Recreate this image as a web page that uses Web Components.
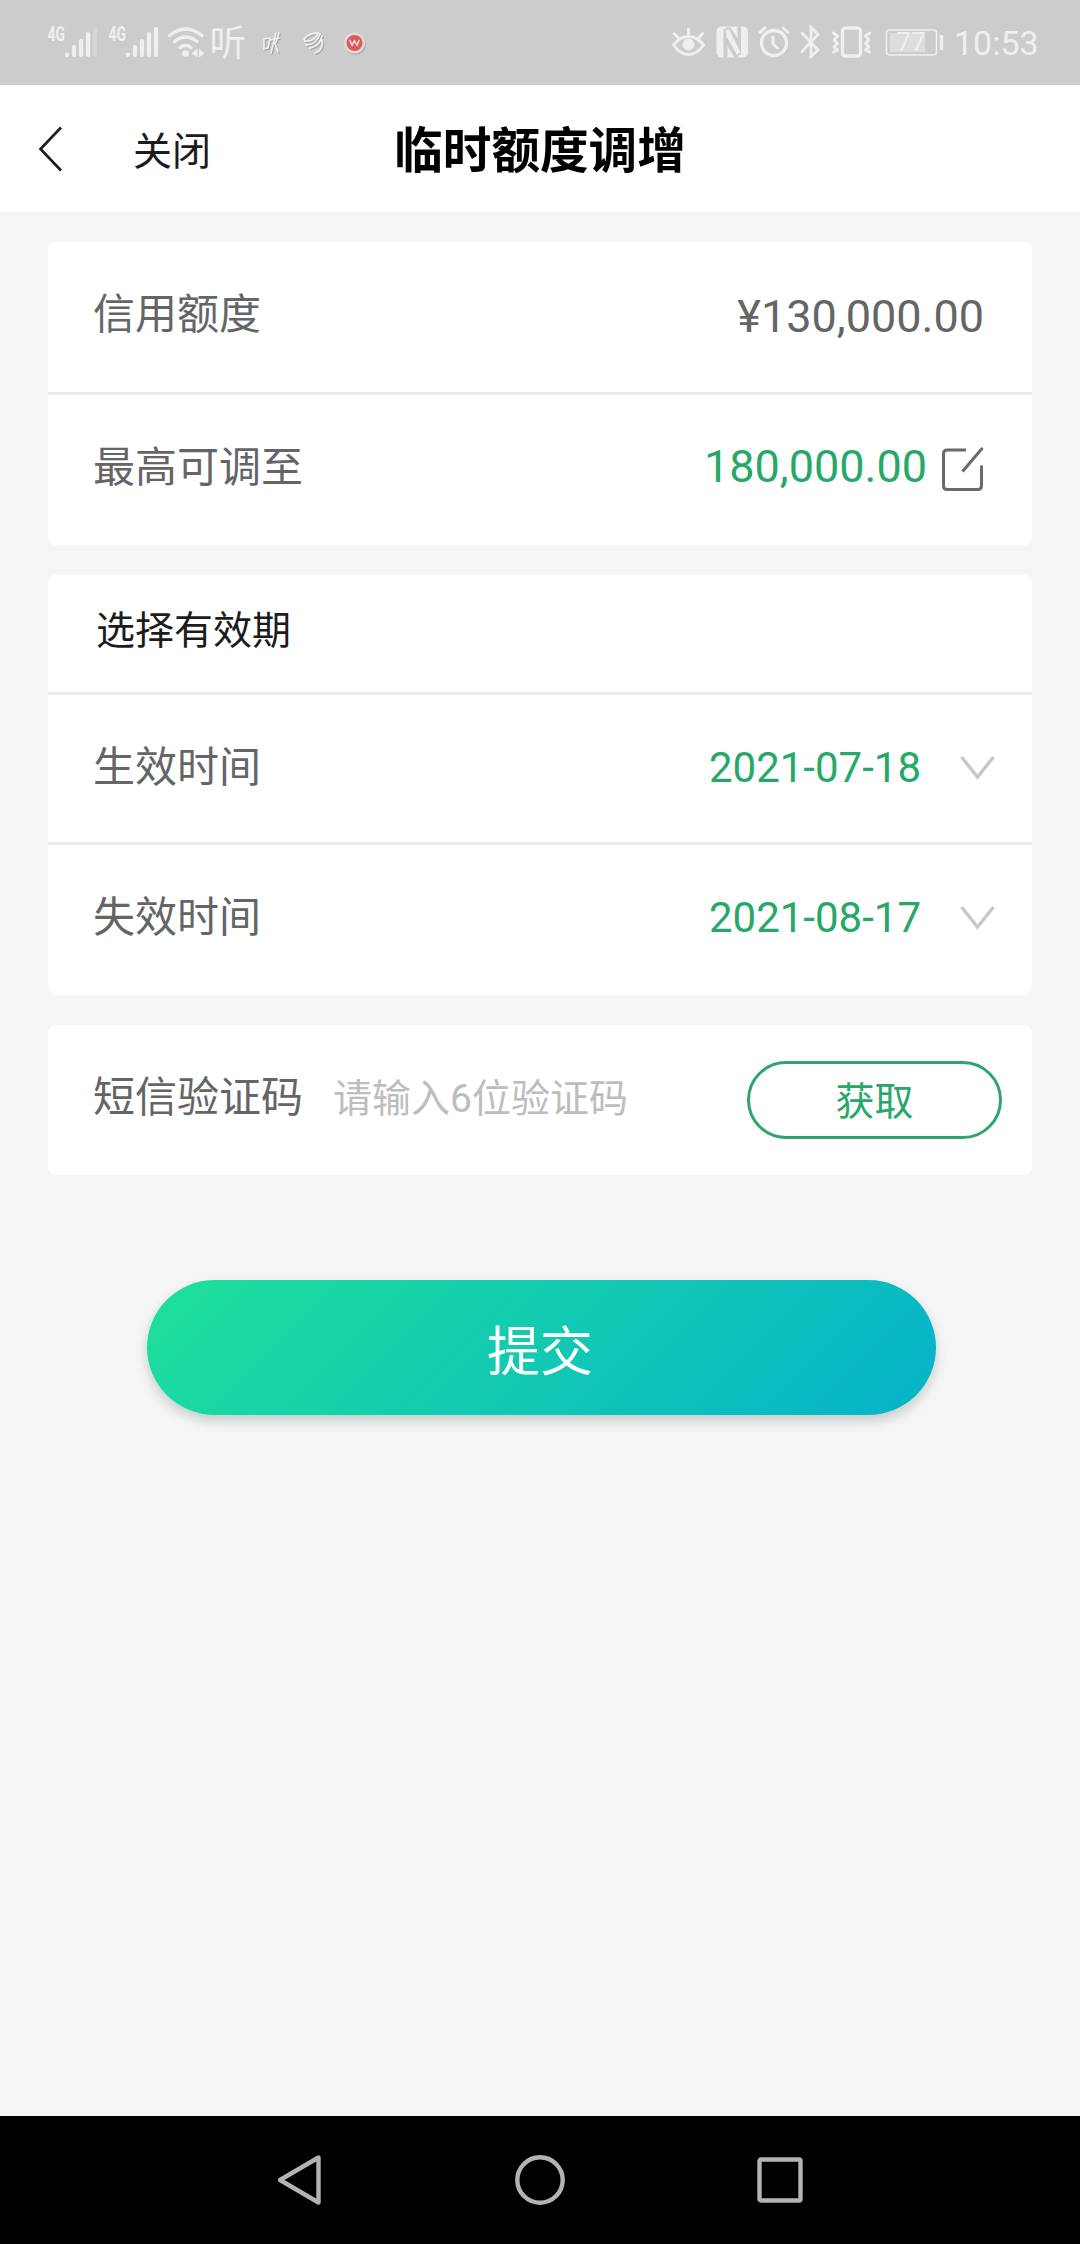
<!DOCTYPE html>
<html lang="zh-CN">
<head>
<meta charset="utf-8">
<meta name="viewport" content="width=device-width">
<title>临时额度调增</title>
<style>
	html, body {
		margin: 0;
		height: 100%;
	}
	body {
		background: #f5f5f5;
		font-family: Roboto, "Noto Sans CJK SC", sans-serif;
		color: #636567;
	}
</style>
</head>
<body>
<limit-page></limit-page>

<script>
class StatusBar extends HTMLElement {
	constructor() {
		super();
		this.attachShadow({ mode: 'open' });
		this.shadowRoot.innerHTML = `
			<style>
				:host {
					display: flex;
					justify-content: space-between;
					height: 85px;
					background: #cccccc;
					color: #efefef;
				}
				.group {
					display: flex;
				}
				.left { padding-left: 44px; }
				.right { padding-right: 42px; }
				svg {
					display: block;
					height: 85px;
					fill: none;
					stroke: #efefef;
					stroke-width: 3.4;
					stroke-linecap: round;
					stroke-linejoin: round;
				}
				text, .solid {
					fill: #efefef;
					stroke: none;
				}
				text {
					font-family: Roboto, "Noto Sans CJK SC", sans-serif;
				}
				.time {
					width: 84px;
					margin-left: -3px;
					line-height: 86px;
					font-size: 34px;
					white-space: nowrap;
				}
			</style>
			<div class="group left">
				<svg width="61" viewBox="44 0 61 85">
					<text x="47.500" y="40.500" font-size="20.500" font-weight="700" textLength="17.500" lengthAdjust="spacingAndGlyphs">4G</text>
					<g stroke-width="4.200"><path d="M67 54.500v.5M74 47v8M81 41v14M88 34v21"/><path d="M95 29v26" opacity=".25"/></g>
				</svg>
				<svg width="61" viewBox="44 0 61 85">
					<text x="47.500" y="40.500" font-size="20.500" font-weight="700" textLength="17.500" lengthAdjust="spacingAndGlyphs">4G</text>
					<g stroke-width="4.200"><path d="M67 54.500v.5M74 47v8M81 41v14M88 34v21M95 29v26"/></g>
				</svg>
				<svg width="42" viewBox="166 0 42 85">
					<path d="M169.500 35.500Q185.500 22.500 202 35.500M174.500 41.500Q185.500 32.500 197 41.500M180 47.500Q185.500 43.500 191 47.500"/>
					<circle class="solid" cx="185.500" cy="53.500" r="3.300"/>
					<path class="solid" d="M191.500 53.500l6-5v9zM204.500 53.500l-5.500-5v9z"/>
				</svg>
				<svg width="46" viewBox="208 0 46 85">
					<text x="209.500" y="56" font-size="36.500" font-weight="400">听</text>
				</svg>
				<svg width="44" viewBox="254 0 44 85">
					<g stroke="#9d9d9d" stroke-width="1.500" transform="translate(1 1)"><path d="M264 39l6-1-2 10-4 1zM276 33l-5 20M271 40l8-2M275 43l3 9M279 33l-3 9"/></g>
					<path stroke-width="1.700" d="M264 39l6-1-2 10-4 1zM276 33l-5 20M271 40l8-2M275 43l3 9M279 33l-3 9"/>
				</svg>
				<svg width="44" viewBox="298 0 44 85">
					<path stroke="#9d9d9d" stroke-width="1.500" transform="translate(1 1)" d="M304 39Q309 33 318 33 315 42 305 41zM306 45Q316 45 320 34M310 48Q320 46 322 36M315 53Q324 50 322 40"/>
					<path stroke-width="1.800" d="M304 39Q309 33 318 33 315 42 305 41zM306 45Q316 45 320 34M310 48Q320 46 322 36M315 53Q324 50 322 40"/>
				</svg>
				<svg width="30" viewBox="342 0 30 85">
					<circle cx="355.500" cy="44.500" r="10.500" stroke="none" fill="#b0b0b0"/>
					<circle cx="354.500" cy="43" r="10.500" stroke="none" fill="#e2dada"/>
					<circle cx="354.500" cy="43" r="8" stroke="none" fill="#d95f5f"/>
					<path stroke="#f6e4e4" stroke-width="1.400" d="M350 40.500l2 5 2.500-5 2.500 5 2-5"/>
				</svg>
			</div>
			<div class="group right">
				<svg width="43" viewBox="670 0 43 85">
					<path stroke-width="3" d="M673.500 45Q680 36.500 688.500 36.500T703.500 45Q697 54.500 688.500 54.500T673.500 45zM688.500 29v5M674 33.500l4 4M702.500 33.500l-3.500 4"/>
					<circle class="solid" cx="688.500" cy="44.500" r="6"/>
				</svg>
				<svg width="41" viewBox="713 0 41 85">
					<rect class="solid" x="716.500" y="26.500" width="31.500" height="31" rx="5"/>
					<path stroke="none" fill="#cccccc" d="M723.500 57.500V30l3-2.500v9L739 57.500h-4.500L727.500 46v11.500zM741 26.500V54l-3 2-.500-8L726 27.500h4.500L737.500 38V26.500z"/>
					<path stroke="#efefef" stroke-width="4.500" stroke-linecap="butt" d="M727 30L738.500 53.500"/>
				</svg>
				<svg width="44" viewBox="754 0 44 85">
					<circle cx="774" cy="43" r="12.500"/>
					<path stroke-width="3" d="M773 37v7l4.500 4M760 32.500l5-4.500M788 32.500l-5-4.500"/>
				</svg>
				<svg width="31" viewBox="798 0 31 85">
					<path stroke-width="2.800" stroke-linejoin="miter" d="M802 33l16 17-7 6.500V27.500l7 7-16 17"/>
				</svg>
				<svg width="53" viewBox="829 0 53 85">
					<rect x="842.500" y="28" width="18" height="28" rx="3"/>
					<path stroke-width="3" d="M833.500 33l4 3-3.500 4 3.500 3.500-3.500 3.500 3.500 3-4 2M869.500 33l-4 3 3.500 4-3.500 3.500 3.500 3.500-3.500 3 4 2"/>
				</svg>
				<svg width="75" viewBox="882 0 75 85">
					<rect x="886.500" y="30" width="50" height="25" rx="3" stroke-width="1.500"/>
					<rect x="890" y="33" width="35" height="19" stroke="none" fill="#dddddd"/>
					<path stroke-width="3.500" stroke-linecap="butt" d="M941.500 35v15"/>
					<text x="896.500" y="51" font-size="26">77</text>
				</svg>
				<span class="time">10:53</span>
			</div>
		`;
	}
}

class TitleBar extends HTMLElement {
	constructor() {
		super();
		this.attachShadow({ mode: 'open' });
		this.shadowRoot.innerHTML = `
			<style>
				:host {
					display: grid;
					grid-template-columns: 1fr auto 1fr;
					align-items: center;
					height: 127px;
					background: #fff;
					color: #1c1c1c;
				}
				.side {
					display: flex;
					align-items: center;
					padding-left: 36px;
					gap: 69px;
					font-size: 39px;
				}
				.close {
					padding-bottom: 2px;
				}
				svg {
					display: block;
					fill: none;
					stroke: #1c1c1c;
					stroke-width: 2.6;
				}
				h1 {
					margin: 0;
					padding-top: 7px;
					font-size: 48.6px;
					line-height: 72px;
					font-weight: 700;
					color: #000;
				}
			</style>
			<div class="side">
				<svg width="28" height="48" viewBox="0 0 28 48"><path d="M25 2.500L4.500 24 25 45.500"/></svg>
				<span class="close"><slot name="close"></slot></span>
			</div>
			<h1><slot></slot></h1>
		`;
	}
}

class FormCard extends HTMLElement {
	constructor() {
		super();
		this.attachShadow({ mode: 'open' });
		this.shadowRoot.innerHTML = `
			<style>
				:host {
					display: flex;
					flex-direction: column;
					background: #fff;
					border-radius: 8px;
					overflow: hidden;
				}
				::slotted(:not(:last-child)) {
					border-bottom: 3px solid #eceeee;
				}
			</style>
			<slot></slot>
		`;
	}
}

class FormRow extends HTMLElement {
	constructor() {
		super();
		this.attachShadow({ mode: 'open' });
		this.shadowRoot.innerHTML = `
			<style>
				:host {
					display: flex;
					align-items: center;
					height: var(--row-height, 150px);
					padding: 0 var(--row-end, 48px) 0 45px;
				}
				.label {
					font-size: 42px;
					line-height: 60px;
					padding-bottom: var(--label-lift, 4px);
				}
				:host([heading]) .label {
					font-size: 39px;
					padding-left: 3px;
					color: #1c1c1c;
				}
				.hint {
					flex: 1;
					padding: 0 0 2px 30px;
					font-size: 39px;
					line-height: 56px;
					color: #bdbdbd;
				}
				.value {
					display: flex;
					align-items: center;
					padding-bottom: var(--value-lift, 0);
					font-size: 45px;
					line-height: 54px;
				}
				:host([active]) .value {
					color: #27a768;
				}
				:host([date]) .value {
					font-size: 42px;
				}
			</style>
			<span class="label"><slot name="label"></slot></span>
			<span class="hint"><slot name="hint"></slot></span>
			<span class="value"><slot></slot></span>
		`;
	}
}

class EditIcon extends HTMLElement {
	constructor() {
		super();
		this.attachShadow({ mode: 'open' });
		this.shadowRoot.innerHTML = `
			<style>
				:host { display: block; margin: 4px 0 0 14px; }
				svg {
					display: block;
					fill: none;
					stroke: #6a6a6a;
					stroke-width: 3;
				}
			</style>
			<svg width="43" height="46" viewBox="0 0 43 46"><path d="M25 4H6Q2.500 4 2.500 8V39.500Q2.500 43.500 6 43.500H37Q40.500 43.500 40.500 39.500V19.500M41.500 2L21.500 25.500"/></svg>
		`;
	}
}

class DownIcon extends HTMLElement {
	constructor() {
		super();
		this.attachShadow({ mode: 'open' });
		this.shadowRoot.innerHTML = `
			<style>
				:host { display: block; margin-left: 39px; }
				svg {
					display: block;
					fill: none;
					stroke: #c8c8cc;
					stroke-width: 3.4;
				}
			</style>
			<svg width="36" height="26" viewBox="0 0 36 26"><path d="M1.500 2L17.500 22 33.500 2"/></svg>
		`;
	}
}

class PillButton extends HTMLElement {
	constructor() {
		super();
		this.attachShadow({ mode: 'open' });
		this.shadowRoot.innerHTML = `
			<style>
				:host {
					display: block;
				}
				button {
					display: block;
					box-sizing: border-box;
					width: 255px;
					height: 78px;
					padding: 3px 0 0;
					border: 3px solid #2fa56b;
					border-radius: 39px;
					background: #fff;
					color: #27a768;
					font: 39px/70px Roboto, "Noto Sans CJK SC", sans-serif;
				}
				:host([primary]) button {
					width: 789px;
					height: 135px;
					padding: 10px 3px 0 0;
					border: 0;
					border-radius: 68px;
					background: linear-gradient(135deg, #1fe09a, #06b2ca);
					box-shadow: 0 6px 12px rgba(0, 60, 40, 0.2);
					color: #fff;
					font-size: 53px;
				}
			</style>
			<button><slot></slot></button>
		`;
	}
}

class SystemNav extends HTMLElement {
	constructor() {
		super();
		this.attachShadow({ mode: 'open' });
		this.shadowRoot.innerHTML = `
			<style>
				:host {
					display: flex;
					justify-content: center;
					align-items: center;
					gap: 188px;
					height: 128px;
					background: #000;
				}
				svg {
					display: block;
					fill: none;
					stroke: #b3b3b3;
					stroke-width: 4.4;
					stroke-linejoin: round;
				}
			</style>
			<svg width="52" height="52" viewBox="0 0 52 52"><path d="M44.500 3.500V48.500L6 26z"/></svg>
			<svg width="52" height="52" viewBox="0 0 52 52"><circle cx="26" cy="26" r="22.700"/></svg>
			<svg width="52" height="52" viewBox="0 0 52 52"><rect x="5.500" y="5.500" width="41" height="41" rx="1.500"/></svg>
		`;
	}
}

class LimitPage extends HTMLElement {
	constructor() {
		super();
		this.attachShadow({ mode: 'open' });
		this.shadowRoot.innerHTML = `
			<style>
				:host {
					display: flex;
					flex-direction: column;
					height: 2244px;
				}
				main {
					flex: 1;
					display: flex;
					flex-direction: column;
					gap: 30px;
					padding: 30px 48px 0;
				}
				form-row[active] {
					--value-lift: 6px;
				}
				.period form-row {
					--row-height: 147px;
					--row-end: 36px;
					--label-lift: 1px;
					--value-lift: 2px;
				}
				.period form-row[heading] {
					--row-height: 117px;
					--label-lift: 6px;
				}
				.period form-row:last-child {
					--row-height: 150px;
					--label-lift: 4px;
					--value-lift: 5px;
				}
				.code form-row {
					--row-end: 30px;
				}
				.submit {
					align-self: center;
					margin: 75px 0 0 3px;
				}
			</style>
			<status-bar></status-bar>
			<title-bar><span slot="close">关闭</span>临时额度调增</title-bar>
			<main>
				<form-card>
					<form-row><span slot="label">信用额度</span>¥130,000.00</form-row>
					<form-row active><span slot="label">最高可调至</span>180,000.00<edit-icon></edit-icon></form-row>
				</form-card>
				<form-card class="period">
					<form-row heading><span slot="label">选择有效期</span></form-row>
					<form-row active date><span slot="label">生效时间</span>2021-07-18<down-icon></down-icon></form-row>
					<form-row active date><span slot="label">失效时间</span>2021-08-17<down-icon></down-icon></form-row>
				</form-card>
				<form-card class="code">
					<form-row>
						<span slot="label">短信验证码</span>
						<span slot="hint">请输入6位验证码</span>
						<pill-button>获取</pill-button>
					</form-row>
				</form-card>
				<pill-button class="submit" primary>提交</pill-button>
			</main>
			<system-nav></system-nav>
		`;
	}
}

customElements.define('status-bar', StatusBar);
customElements.define('title-bar', TitleBar);
customElements.define('form-card', FormCard);
customElements.define('form-row', FormRow);
customElements.define('edit-icon', EditIcon);
customElements.define('down-icon', DownIcon);
customElements.define('pill-button', PillButton);
customElements.define('system-nav', SystemNav);
customElements.define('limit-page', LimitPage);
</script>
</body>
</html>
